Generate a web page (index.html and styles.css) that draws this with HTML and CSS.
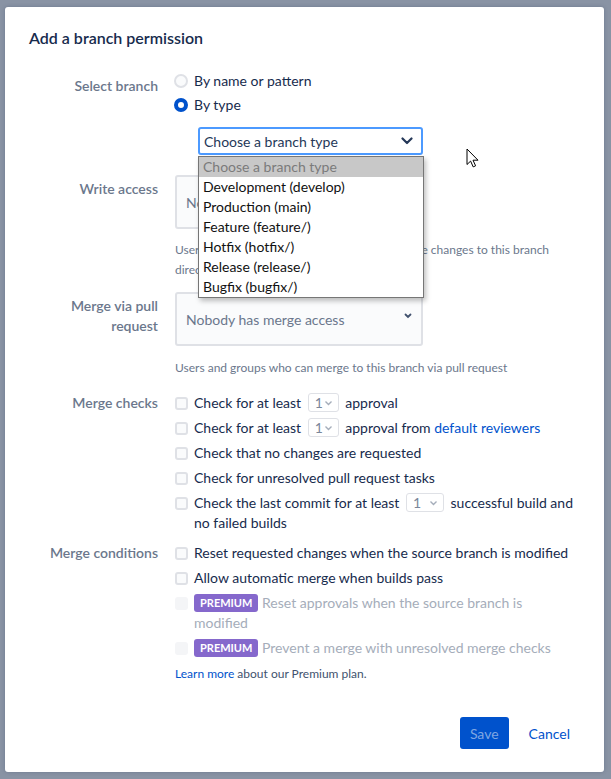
FILE: index.html
```html
<!DOCTYPE html>
<html lang="en">
<head>
  <meta charset="UTF-8" />
  <meta name="viewport" content="width=device-width, initial-scale=1.0"/>
  <title>Add a branch permission</title>
  <link rel="stylesheet" href="styles.css">
</head>
<body>
  <div class="modal">
    <h2 class="modal-title">Add a branch permission</h2>

    <form class="perm-form">
      <div class="row row-branch">
        <div class="label">Select branch</div>
        <div class="field">
          <label class="radio"><span class="radio-mark"></span>By name or pattern</label>
          <label class="radio"><span class="radio-mark checked"></span>By type</label>
          <div class="type-select">
            <div class="select focused">
              <span>Choose a branch type</span>
              <svg class="chev" width="12" height="8" viewBox="0 0 12 8"><path d="M1.5 1.5 6 6l4.5-4.5" fill="none" stroke="#253858" stroke-width="2.2" stroke-linecap="round" stroke-linejoin="round"/></svg>
            </div>
            <ul class="options">
              <li class="selected">Choose a branch type</li>
              <li>Development (develop)</li>
              <li>Production (main)</li>
              <li>Feature (feature/)</li>
              <li>Hotfix (hotfix/)</li>
              <li>Release (release/)</li>
              <li>Bugfix (bugfix/)</li>
            </ul>
          </div>
        </div>
      </div>

      <div class="row row-write">
        <div class="label">Write access</div>
        <div class="field">
          <div class="picker">
            <span>Nobody has write access</span>
            <svg class="chev-sm" width="8" height="6" viewBox="0 0 8 6"><path d="M1.5 1.5 4 4l2.5-2.5" fill="none" stroke="#42526e" stroke-width="1.8" stroke-linecap="round"/></svg>
          </div>
          <p class="help">Users and groups who can write, push and make changes to this branch directly</p>
        </div>
      </div>

      <div class="row row-merge">
        <div class="label">Merge via pull request</div>
        <div class="field">
          <div class="picker">
            <span>Nobody has merge access</span>
            <svg class="chev-sm" width="8" height="6" viewBox="0 0 8 6"><path d="M1.5 1.5 4 4l2.5-2.5" fill="none" stroke="#42526e" stroke-width="1.8" stroke-linecap="round"/></svg>
          </div>
          <p class="help">Users and groups who can merge to this branch via pull request</p>
        </div>
      </div>

      <div class="row row-checks">
        <div class="label">Merge checks</div>
        <div class="field checklist">
          <label class="check"><span class="box"></span><span>Check for at least <span class="num">1<svg width="9" height="6" viewBox="0 0 9 6"><path d="M1.5 1.5 4.5 4.5 7.5 1.5" fill="none" stroke="#a5adba" stroke-width="1.4"/></svg></span> approval</span></label>
          <label class="check"><span class="box"></span><span>Check for at least <span class="num">1<svg width="9" height="6" viewBox="0 0 9 6"><path d="M1.5 1.5 4.5 4.5 7.5 1.5" fill="none" stroke="#a5adba" stroke-width="1.4"/></svg></span> approval from <a href="#">default reviewers</a></span></label>
          <label class="check"><span class="box"></span><span>Check that no changes are requested</span></label>
          <label class="check"><span class="box"></span><span>Check for unresolved pull request tasks</span></label>
          <label class="check"><span class="box"></span><span>Check the last commit for at least <span class="num wide">1<svg width="9" height="6" viewBox="0 0 9 6"><path d="M1.5 1.5 4.5 4.5 7.5 1.5" fill="none" stroke="#a5adba" stroke-width="1.4"/></svg></span> successful build and no failed builds</span></label>
        </div>
      </div>

      <div class="row row-conditions">
        <div class="label">Merge conditions</div>
        <div class="field checklist">
          <label class="check"><span class="box"></span><span>Reset requested changes when the source branch is modified</span></label>
          <label class="check"><span class="box"></span><span>Allow automatic merge when builds pass</span></label>
          <label class="check disabled"><span class="box"></span><span><span class="badge">Premium</span> Reset approvals when the source branch is modified</span></label>
          <label class="check disabled"><span class="box"></span><span><span class="badge">Premium</span> Prevent a merge with unresolved merge checks</span></label>
          <p class="premium-note"><a href="#">Learn more</a> about our Premium plan.</p>
        </div>
      </div>

      <div class="footer">
        <button type="submit" class="btn-save">Save</button>
        <button type="button" class="btn-cancel">Cancel</button>
      </div>
    </form>

    <svg class="cursor" width="13" height="20" viewBox="0 0 13 20"><path d="M1 1v15.5l3.6-3.4 2.6 5.8 2.4-1.1-2.6-5.6H12z" fill="#fff" stroke="#000" stroke-width="1" stroke-linejoin="round"/></svg>
  </div>
</body>
</html>
```

FILE: styles.css
```css
body {
  margin: 0;
  background: #8993a4;
  font-family: Lato, "Noto Sans", sans-serif;
  font-size: 14px;
  color: #172b4d;
  height: 779px;
  overflow: hidden;
}
.modal {
  position: relative;
  margin: 7px 0 0 5px;
  width: 599px;
  height: 765px;
  box-sizing: border-box;
  padding: 20px 24px 0 24px;
  background: #fff;
  border-radius: 3px;
  box-shadow: 0 0 4px rgba(9,30,66,0.2);
}
.modal-title {
  margin: 0;
  font-size: 16px;
  line-height: 22px;
  font-weight: 600;
  color: #172b4d;
}
.perm-form {
  margin-top: 22px;
}
.row {
  display: grid;
  grid-template-columns: 129px 400px;
  column-gap: 17px;
}
.label {
  text-align: right;
  color: #6b778c;
  font-weight: 600;
  line-height: 20px;
  padding-top: 4px;
}
.row-branch .label { padding-top: 5px; }
.row-checks .label,
.row-conditions .label { padding-top: 0; }
.row-write { margin-top: 20px; }
.row-merge { margin-top: 12px; }
.row-checks { margin-top: 15px; }
.row-conditions { margin-top: 10px; }

.field {
  min-width: 0;
}
.radio {
  display: flex;
  align-items: center;
  line-height: 20px;
  color: #172b4d;
}
.radio + .radio { margin-top: 4px; }
.radio-mark {
  width: 14px;
  height: 14px;
  box-sizing: border-box;
  border-radius: 50%;
  border: 2px solid #dfe1e6;
  background: #fafbfc;
  margin: 0 6px 0 -1px;
}
.radio-mark.checked {
  border: 4px solid #0052cc;
  background: #fff;
}

.type-select {
  position: relative;
  margin: 12px 0 0 23px;
  width: 225px;
}
.select {
  height: 28px;
  box-sizing: border-box;
  display: flex;
  align-items: center;
  justify-content: space-between;
  padding: 0 8px 0 4px;
  border: 2px solid #4c9aff;
  border-radius: 3px;
  color: #253858;
}
.options {
  position: absolute;
  top: 29px;
  left: 0;
  width: 226px;
  box-sizing: border-box;
  margin: 0;
  padding: 0;
  list-style: none;
  background: #fff;
  border: 1px solid #767676;
  box-shadow: 2px 3px 5px rgba(0,0,0,0.25);
  z-index: 2;
}
.options li {
  height: 20px;
  line-height: 20px;
  padding-left: 4px;
  color: #111;
}
.options li.selected {
  background: #c8c8c8;
  color: #7b7b7b;
}

.picker {
  width: 248px;
  height: 54px;
  box-sizing: border-box;
  display: flex;
  align-items: center;
  justify-content: space-between;
  padding: 0 9px 0 9px;
  background: #fafbfc;
  border: 2px solid #dfe1e6;
  border-radius: 3px;
  color: #6b778c;
}
.picker .chev-sm { margin-top: -6px; }
.help {
  margin: 11px 0 0 0;
  font-size: 12px;
  line-height: 20px;
  color: #6b778c;
}
.row-merge .help { margin-top: 12px; }

.checklist {
  display: flex;
  flex-direction: column;
  gap: 5px;
}
.check {
  display: flex;
  align-items: flex-start;
  line-height: 20px;
  color: #172b4d;
}
.box {
  flex: none;
  width: 13px;
  height: 13px;
  box-sizing: border-box;
  margin: 4px 6px 0 0;
  border: 2px solid #dfe1e6;
  border-radius: 3px;
  background: #fafbfc;
}
.check.disabled { color: #a5adba; }
.check.disabled .box {
  border-color: #f4f5f7;
  background: #f4f5f7;
}
.num {
  display: inline-flex;
  align-items: center;
  justify-content: space-between;
  width: 31px;
  height: 19px;
  box-sizing: border-box;
  padding: 0 5px 0 6px;
  margin: 0 3px;
  vertical-align: top;
  border: 1px solid #dfe1e6;
  border-radius: 3px;
  color: #7a869a;
  line-height: 17px;
}
.num.wide { width: 38px; }
a {
  color: #0052cc;
  text-decoration: none;
}
.badge {
  display: inline-block;
  height: 18px;
  line-height: 18px;
  padding: 0 6px;
  border-radius: 3px;
  background: #8568cc;
  color: #fff;
  font-size: 11px;
  font-weight: 700;
  text-transform: uppercase;
  vertical-align: top;
  margin-top: 1px;
}
.premium-note {
  margin: 2px 0 0 0;
  font-size: 12px;
  line-height: 18px;
  color: #42526e;
}

.footer {
  display: flex;
  justify-content: flex-end;
  gap: 10px;
  width: 551px;
  margin-top: 34px;
}
.footer button {
  height: 32px;
  padding: 0 10px;
  border: none;
  border-radius: 3px;
  font-family: inherit;
  font-size: 14px;
  cursor: pointer;
}
.btn-save {
  background: #0052cc;
  color: #7fa6e2;
}
.btn-cancel {
  background: none;
  color: #0052cc;
}
.cursor {
  position: absolute;
  left: 461px;
  top: 141px;
}
```
